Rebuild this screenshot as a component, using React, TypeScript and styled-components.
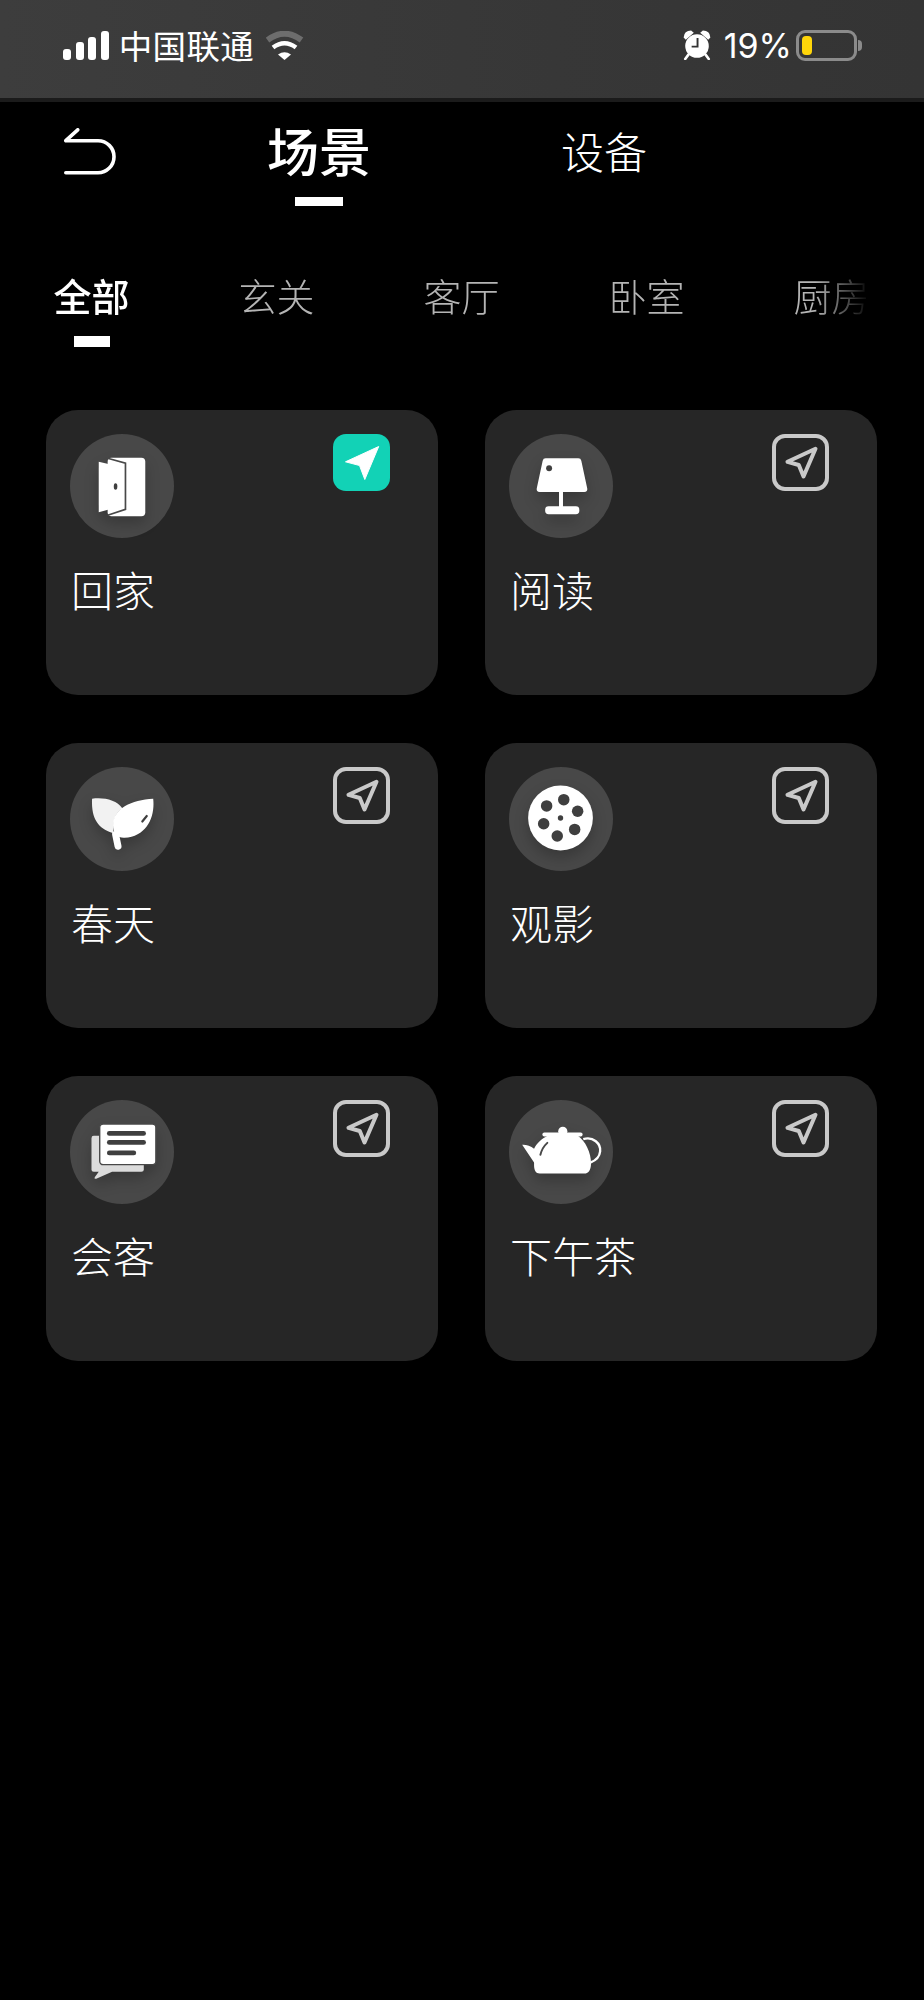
import styled, { createGlobalStyle } from 'styled-components'
import type { ReactNode } from 'react'

const GlobalStyle = createGlobalStyle`
  html, body {
    margin: 0;
    background: #000;
  }
  body {
    font-family: "Noto Sans CJK SC", "Liberation Sans", sans-serif;
  }
`

const Page = styled.div`
  width: 924px;
  min-height: 2000px;
  background: #000;
  color: #fff;
`

const StatusBar = styled.header`
  box-sizing: border-box;
  height: 102px;
  padding: 0 62px 8px 63px;
  display: flex;
  align-items: center;
  justify-content: space-between;
  background: linear-gradient(to right, #3d3d3d, #373737 60%, #343434);
  border-bottom: 4px solid #1b1b1b;
`

const StatusGroup = styled.div`
  display: flex;
  align-items: center;
`

const SignalBars = styled.div`
  display: flex;
  align-items: flex-end;
  gap: 4.6px;
  height: 29px;
  margin-right: 10px;
`

const SignalBar = styled.span<{ $h: number }>`
  width: 8px;
  height: ${(p) => p.$h}px;
  border-radius: 3px;
  background: #fff;
`

const Carrier = styled.span`
  font-size: 33.5px;
  line-height: 40px;
  letter-spacing: 0.3px;
  margin-right: 12px;
`

const Percent = styled.span`
  font-family: "Inter", "Liberation Sans", sans-serif;
  font-size: 34px;
  line-height: 40px;
  margin: 2px 4px 0 13px;
`

const Battery = styled.div`
  display: flex;
  align-items: center;
`

const BatteryBody = styled.div`
  box-sizing: border-box;
  width: 61px;
  height: 31px;
  padding: 3px;
  border: 3px solid #8b8b8b;
  border-radius: 9px;
`

const BatteryLevel = styled.div`
  width: 10px;
  height: 100%;
  border-radius: 4px;
  background: #ffd60a;
`

const BatteryTip = styled.span`
  width: 4px;
  height: 11px;
  margin-left: 1px;
  border-radius: 0 4px 4px 0;
  background: #8b8b8b;
`

const TopNav = styled.nav`
  display: flex;
  align-items: flex-start;
  padding: 21px 0 0 64px;
`

const BackIcon = styled.svg`
  flex: none;
  margin: 5px 151px 0 0;
`

const NavItem = styled.div<{ $active?: boolean }>`
  display: flex;
  flex-direction: column;
  align-items: center;
  width: ${(p) => (p.$active ? 104 : 86)}px;
  margin-right: 190px;
  font-size: ${(p) => (p.$active ? 52 : 43)}px;
  font-weight: ${(p) => (p.$active ? 500 : 300)};
  line-height: ${(p) => (p.$active ? 54 : 42)}px;
  padding-top: ${(p) => (p.$active ? 0 : 6)}px;
`

const NavMark = styled.span`
  width: 48px;
  height: 9px;
  margin-top: 20px;
  background: #fff;
`

const FilterStrip = styled.div`
  display: flex;
  gap: 109px;
  width: 815px;
  margin-top: 67px;
  padding-left: 53.5px;
  mask-image: linear-gradient(to right, #000 815px, transparent 870px);
`

const Filter = styled.div<{ $active?: boolean }>`
  flex: none;
  display: flex;
  flex-direction: column;
  align-items: center;
  width: 76px;
  font-size: 38px;
  line-height: 44px;
  font-weight: ${(p) => (p.$active ? 500 : 300)};
  color: ${(p) => (p.$active ? '#fff' : '#b4b4b4')};
`

const FilterMark = styled.span`
  width: 36px;
  height: 11px;
  margin-top: 19px;
  background: #fff;
`

const SceneGrid = styled.main`
  display: grid;
  grid-template-columns: 392px 392px;
  grid-auto-rows: 285px;
  gap: 48px 47px;
  padding: 63px 0 0 46px;
`

const SceneCard = styled.article`
  box-sizing: border-box;
  padding: 24px 48px 0 24px;
  background: #262626;
  border-radius: 32px;
`

const CardTop = styled.div`
  display: flex;
  align-items: flex-start;
  justify-content: space-between;
`

const IconCircle = styled.div`
  width: 104px;
  height: 104px;
  border-radius: 50%;
  background: #484848;
`

const SceneIcon = styled.svg`
  display: block;
  filter: drop-shadow(0 7px 7px rgba(0, 0, 0, 0.22));
`

const SendBadge = styled.div<{ $on?: boolean }>`
  box-sizing: border-box;
  display: flex;
  align-items: center;
  justify-content: center;
  width: 57px;
  height: 57px;
  border-radius: 13px;
  background: ${(p) => (p.$on ? '#12d2b6' : 'transparent')};
  border: ${(p) => (p.$on ? 'none' : '4px solid #c9c9c9')};
`

const SceneName = styled.div`
  margin: 26px 0 0 1px;
  font-size: 42px;
  font-weight: 300;
  line-height: 50px;
  color: #fff;
`

const CIRCLE = '#484848'
const INK = '#3f3f3f'

function DoorIcon() {
  return (
    <>
      <rect x="38" y="24" width="38" height="59" rx="4" fill="#fff" />
      <path d="M29 28 L55 34 V72 L29 79 Z" fill="#fff" />
      <path d="M38 24.5 L56 29.5 V76 L38 82" fill="none" stroke={CIRCLE} strokeWidth="1.7" />
      <ellipse cx="46" cy="53" rx="1.8" ry="3.2" fill={INK} />
    </>
  )
}

function LampIcon() {
  return (
    <>
      <path
        d="M37 24.5 H70 Q72.5 24.5 73 27 L79 55 Q79.5 58.5 76 58.5 H31 Q27.5 58.5 28 55 L34 27 Q34.5 24.5 37 24.5 Z"
        fill="#fff"
      />
      <circle cx="40.5" cy="34.5" r="3" fill={INK} />
      <rect x="50.5" y="58" width="4" height="17" fill="#fff" />
      <rect x="36.5" y="73" width="34.5" height="8" rx="3.5" fill="#fff" />
    </>
  )
}

function LeafIcon() {
  return (
    <>
      <path d="M22.3 32 C34 30.5 47 33 53 42 C46 46 43 54 44 67 C31 63 21 55 22.3 32 Z" fill="#f2f2f2" />
      <path d="M84 32 C86 50 78 70 55 71.5 C48 72 43 66 43.5 58 C44 42 62 33 84 32 Z" fill="#fff" />
      <path d="M46 68 L48.5 80" stroke="#fff" strokeWidth="7" strokeLinecap="round" />
      <path d="M73 55 L77.5 49.5" stroke={INK} strokeWidth="2.2" strokeLinecap="round" />
    </>
  )
}

function ReelIcon() {
  return (
    <>
      <circle cx="52" cy="51.5" r="32.7" fill="#fff" />
      <circle cx="55.3" cy="33" r="5.8" fill={INK} />
      <circle cx="69.3" cy="44.7" r="5.8" fill={INK} />
      <circle cx="66.3" cy="63" r="5.8" fill={INK} />
      <circle cx="48.7" cy="69.7" r="5.8" fill={INK} />
      <circle cx="35" cy="57.3" r="5.8" fill={INK} />
      <circle cx="38" cy="39.3" r="5.8" fill={INK} />
      <circle cx="52" cy="51.5" r="2.7" fill={INK} />
    </>
  )
}

function ChatIcon() {
  return (
    <>
      <path
        d="M24 36 H72 Q74.5 36 74.5 38.5 V70.5 Q74.5 72.5 72 72.5 H42.5 L26.5 79.5 Q24 80 25 78 L29 72.5 H24 Q21.7 72.5 21.7 70.5 V38.5 Q21.7 36 24 36 Z"
        fill="#dcdcdc"
      />
      <rect x="30" y="24.3" width="56.7" height="41" rx="3.5" fill="#fff" stroke={CIRCLE} strokeWidth="1.4" />
      <rect x="37.3" y="31.3" width="39.4" height="4.8" rx="2.4" fill={INK} />
      <rect x="37.3" y="40.4" width="39.4" height="4.8" rx="2.4" fill={INK} />
      <rect x="37.3" y="51" width="29.5" height="4.8" rx="2.4" fill={INK} />
    </>
  )
}

function TeapotIcon() {
  return (
    <>
      <circle cx="54.3" cy="31.5" r="4.6" fill="#fff" />
      <rect x="33.7" y="32.7" width="40.6" height="4.2" rx="2" fill="#fff" />
      <path
        d="M39 36 H69.5 C77 41 83 53 82.8 64 C82.7 71 80 74.3 76 74.3 H31 C27 74.3 25.3 71 25.3 66 V63 L13.3 45.3 C17 45 22 46.5 25.3 49.3 C27.5 44 33 39 39 36 Z"
        fill="#fff"
      />
      <path d="M38.7 43.3 Q33.5 48 31.7 55.3" fill="none" stroke={CIRCLE} strokeWidth="2" strokeLinecap="round" />
      <path d="M75 39.5 C85 36.5 93 44 92 52 C91.5 57 87.5 61 82.5 63" fill="none" stroke="#fff" strokeWidth="2.4" />
    </>
  )
}

function SendIcon({ on }: { on?: boolean }) {
  return (
    <svg width="36" height="36" viewBox="11 11 36 36" aria-hidden>
      <path
        d={on ? 'M45.7 12.5 L12.5 27.8 L26.5 31.5 L31.8 45.5 Z' : 'M43.5 14.8 L15.5 27.8 L26.8 31 L31.5 42.5 Z'}
        fill={on ? '#fff' : 'none'}
        stroke={on ? '#fff' : '#c9c9c9'}
        strokeWidth={on ? 1 : 4}
        strokeLinejoin="round"
      />
    </svg>
  )
}

const scenes: { name: string; icon: ReactNode; on?: boolean }[] = [
  { name: '回家', icon: <DoorIcon />, on: true },
  { name: '阅读', icon: <LampIcon /> },
  { name: '春天', icon: <LeafIcon /> },
  { name: '观影', icon: <ReelIcon /> },
  { name: '会客', icon: <ChatIcon /> },
  { name: '下午茶', icon: <TeapotIcon /> },
]

const filters = ['全部', '玄关', '客厅', '卧室', '厨房']

export default function App() {
  return (
    <Page>
      <GlobalStyle />
      <StatusBar>
        <StatusGroup>
          <SignalBars>
            {[11, 18, 23, 29].map((h) => (
              <SignalBar key={h} $h={h} />
            ))}
          </SignalBars>
          <Carrier>中国联通</Carrier>
          <svg width="38" height="29" viewBox="0 0 38 29" aria-hidden>
            <path d="M1.5 9 Q18.5 -3.5 35.5 9" fill="none" stroke="#6d6d6d" strokeWidth="6" />
            <path d="M7 16.5 Q18.5 8 30 16.5" fill="none" stroke="#fff" strokeWidth="4.5" />
            <path d="M12 23.5 Q18.5 19 25 23.5 L18.5 29 Z" fill="#fff" />
          </svg>
        </StatusGroup>
        <StatusGroup>
          <svg width="28" height="30" viewBox="0 0 26 28" aria-hidden>
            <circle cx="13" cy="15" r="11" fill="#fff" />
            <path d="M0.5 7 Q1 0.5 7.5 0.5 L10 2.5 L2.5 9 Z M25.5 7 Q25 0.5 18.5 0.5 L16 2.5 L23.5 9 Z" fill="#fff" />
            <path d="M5 23 L2 27 M21 23 L24 27" stroke="#fff" strokeWidth="2.4" strokeLinecap="round" />
            <path d="M13.5 7.5 V15.5 H8" fill="none" stroke="#333" strokeWidth="1.8" />
          </svg>
          <Percent>19%</Percent>
          <Battery>
            <BatteryBody>
              <BatteryLevel />
            </BatteryBody>
            <BatteryTip />
          </Battery>
        </StatusGroup>
      </StatusBar>

      <TopNav>
        <BackIcon width="52" height="47" viewBox="0 0 52 47" aria-hidden>
          <path
            d="M13.7 1.8 L1.8 12.7 H34 A16 16 0 0 1 34 44.7 H1.8"
            fill="none"
            stroke="#fff"
            strokeWidth="3.6"
            strokeLinecap="round"
            strokeLinejoin="round"
          />
        </BackIcon>
        <NavItem $active>
          场景
          <NavMark />
        </NavItem>
        <NavItem>设备</NavItem>
      </TopNav>

      <FilterStrip>
        {filters.map((f, i) => (
          <Filter key={f} $active={i === 0}>
            {f}
            {i === 0 && <FilterMark />}
          </Filter>
        ))}
      </FilterStrip>

      <SceneGrid>
        {scenes.map((s) => (
          <SceneCard key={s.name}>
            <CardTop>
              <IconCircle>
                <SceneIcon width="104" height="104" viewBox="0 0 105 105" aria-hidden>
                  {s.icon}
                </SceneIcon>
              </IconCircle>
              <SendBadge $on={s.on}>
                <SendIcon on={s.on} />
              </SendBadge>
            </CardTop>
            <SceneName>{s.name}</SceneName>
          </SceneCard>
        ))}
      </SceneGrid>
    </Page>
  )
}
